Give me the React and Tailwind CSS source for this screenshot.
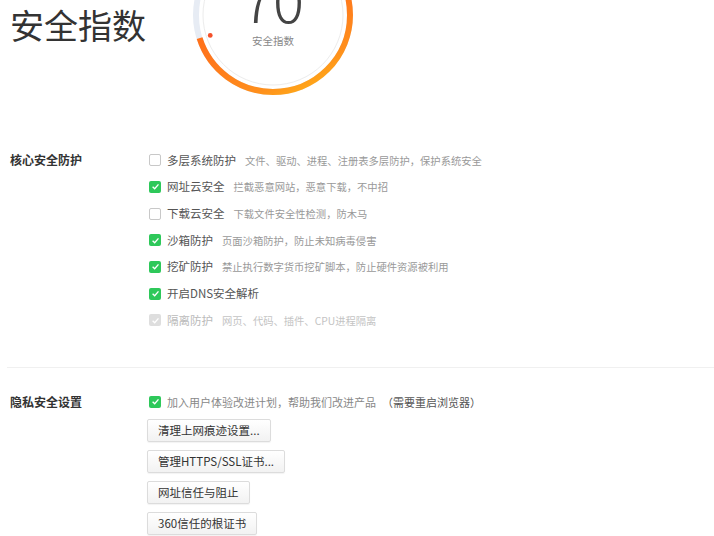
import React from "react";

const FONT = { fontFamily: '"Noto Sans CJK SC", "Noto Sans", sans-serif' };

// ─── Gauge ───────────────────────────────────────────────────────────────────

function Gauge({ value = 70 }) {
  const r = 77;
  const c = 2 * Math.PI * r;
  const len = (c * value) / 100;
  const a = (value / 100) * 2 * Math.PI;
  const dot = { x: 82 + 66 * Math.sin(a), y: 82 - 66 * Math.cos(a) };

  return (
    <div className="relative w-[164px] h-[164px] shrink-0">
      <svg width="164" height="164" viewBox="0 0 164 164">
        <defs>
          <linearGradient id="g" x1="1" y1="0.2" x2="0" y2="0.7">
            <stop offset="0" stopColor="#ff5c16" />
            <stop offset="0.6" stopColor="#ff781c" />
            <stop offset="0.88" stopColor="#ff8f1c" />
            <stop offset="1" stopColor="#ffa818" />
          </linearGradient>
        </defs>
        <circle cx="82" cy="82" r="70" fill="none" stroke="#ececec" strokeWidth="1" />
        <circle cx="82" cy="82" r={r} fill="none" stroke="#e7ecf4" strokeWidth="6" />
        <circle
          cx="82"
          cy="82"
          r={r}
          fill="none"
          stroke="url(#g)"
          strokeWidth="6"
          strokeDasharray={`${len} ${c}`}
          transform="rotate(-90 82 82)"
        />
        <circle cx={dot.x} cy={dot.y} r="2.4" fill="#f4502a" />
      </svg>
      <div className="absolute left-0 right-0 top-[45px] text-center text-[58px] leading-[40px] font-light text-[#444]">
        {value}
      </div>
      <div className="absolute left-0 right-0 top-[103px] text-center text-[10.5px] leading-none text-[#888]">
        安全指数
      </div>
    </div>
  );
}

// ─── Rows ────────────────────────────────────────────────────────────────────

function Check({ state }) {
  if (state === "off")
    return <span className="w-[12px] h-[12px] rounded-[2px] border border-[#c8c8c8] bg-white shrink-0" />;
  const bg = state === "disabled" ? "bg-[#dedede]" : "bg-[#2ec85a]";
  return (
    <span className={`w-[12px] h-[12px] rounded-[2px] ${bg} flex items-center justify-center shrink-0`}>
      <svg width="9" height="9" viewBox="0 0 10 10">
        <path d="M1.8 5.2 L4.1 7.4 L8.3 2.6" fill="none" stroke="#fff" strokeWidth="1.5" />
      </svg>
    </span>
  );
}

const core = [
  { s: "off", t: "多层系统防护", d: "文件、驱动、进程、注册表多层防护，保护系统安全" },
  { s: "on", t: "网址云安全", d: "拦截恶意网站，恶意下载，不中招" },
  { s: "off", t: "下载云安全", d: "下载文件安全性检测，防木马" },
  { s: "on", t: "沙箱防护", d: "页面沙箱防护，防止未知病毒侵害" },
  { s: "on", t: "挖矿防护", d: "禁止执行数字货币挖矿脚本，防止硬件资源被利用" },
  { s: "on", t: "开启DNS安全解析", d: "" },
  { s: "disabled", t: "隔离防护", d: "网页、代码、插件、CPU进程隔离" },
];

const buttons = ["清理上网痕迹设置...", "管理HTTPS/SSL证书...", "网址信任与阻止", "360信任的根证书"];

export default function App() {
  return (
    <div className="w-[714px] h-[536px] overflow-hidden bg-white" style={FONT}>
      {/* Header */}
      <div className="flex h-[147px]">
        <div className="pl-[10px] pt-[3px] w-[191px] text-[34px] leading-[44px] text-[#333]">安全指数</div>
        <div className="-mt-[67px]">
          <Gauge value={70} />
        </div>
      </div>

      {/* 核心安全防护 */}
      <div className="flex">
        <div className="w-[149px] pl-[10px] h-[26.67px] flex items-center text-[12px] font-bold text-[#333]">
          核心安全防护
        </div>
        <div className="flex flex-col">
          {core.map((r) => (
            <div key={r.t} className="h-[26.67px] flex items-center gap-[6px]">
              <Check state={r.s} />
              <span className={`text-[11.5px] ${r.s === "disabled" ? "text-[#bbb]" : "text-[#555]"}`}>{r.t}</span>
              {r.d && (
                <span className={`ml-[3px] text-[10.3px] ${r.s === "disabled" ? "text-[#c4c4c4]" : "text-[#999]"}`}>
                  {r.d}
                </span>
              )}
            </div>
          ))}
        </div>
      </div>

      <div className="ml-[7px] mt-[33px] border-t border-[#f0f0f0]" />

      {/* 隐私安全设置 */}
      <div className="flex mt-[21px]">
        <div className="w-[149px] pl-[10px] h-[26.67px] flex items-center text-[12px] font-bold text-[#333]">
          隐私安全设置
        </div>
        <div className="flex flex-col items-start">
          <div className="h-[26.67px] flex items-center gap-[6px]">
            <Check state="on" />
            <span className="text-[11px] text-[#888]">加入用户体验改进计划，帮助我们改进产品</span>
            <span className="text-[11px] text-[#555]">（需要重启浏览器）</span>
          </div>
          <div className="flex flex-col items-start gap-[8px] mt-[4px] -ml-[2px]">
            {buttons.map((b) => (
              <button
                key={b}
                className="h-[23px] px-[10px] border border-[#dcdcdc] rounded-[2px] bg-gradient-to-b from-white to-[#f2f2f2] shadow-[0_1px_1px_rgba(0,0,0,0.05)] text-[11.5px] text-[#333] leading-none"
              >
                {b}
              </button>
            ))}
          </div>
        </div>
      </div>
    </div>
  );
}
